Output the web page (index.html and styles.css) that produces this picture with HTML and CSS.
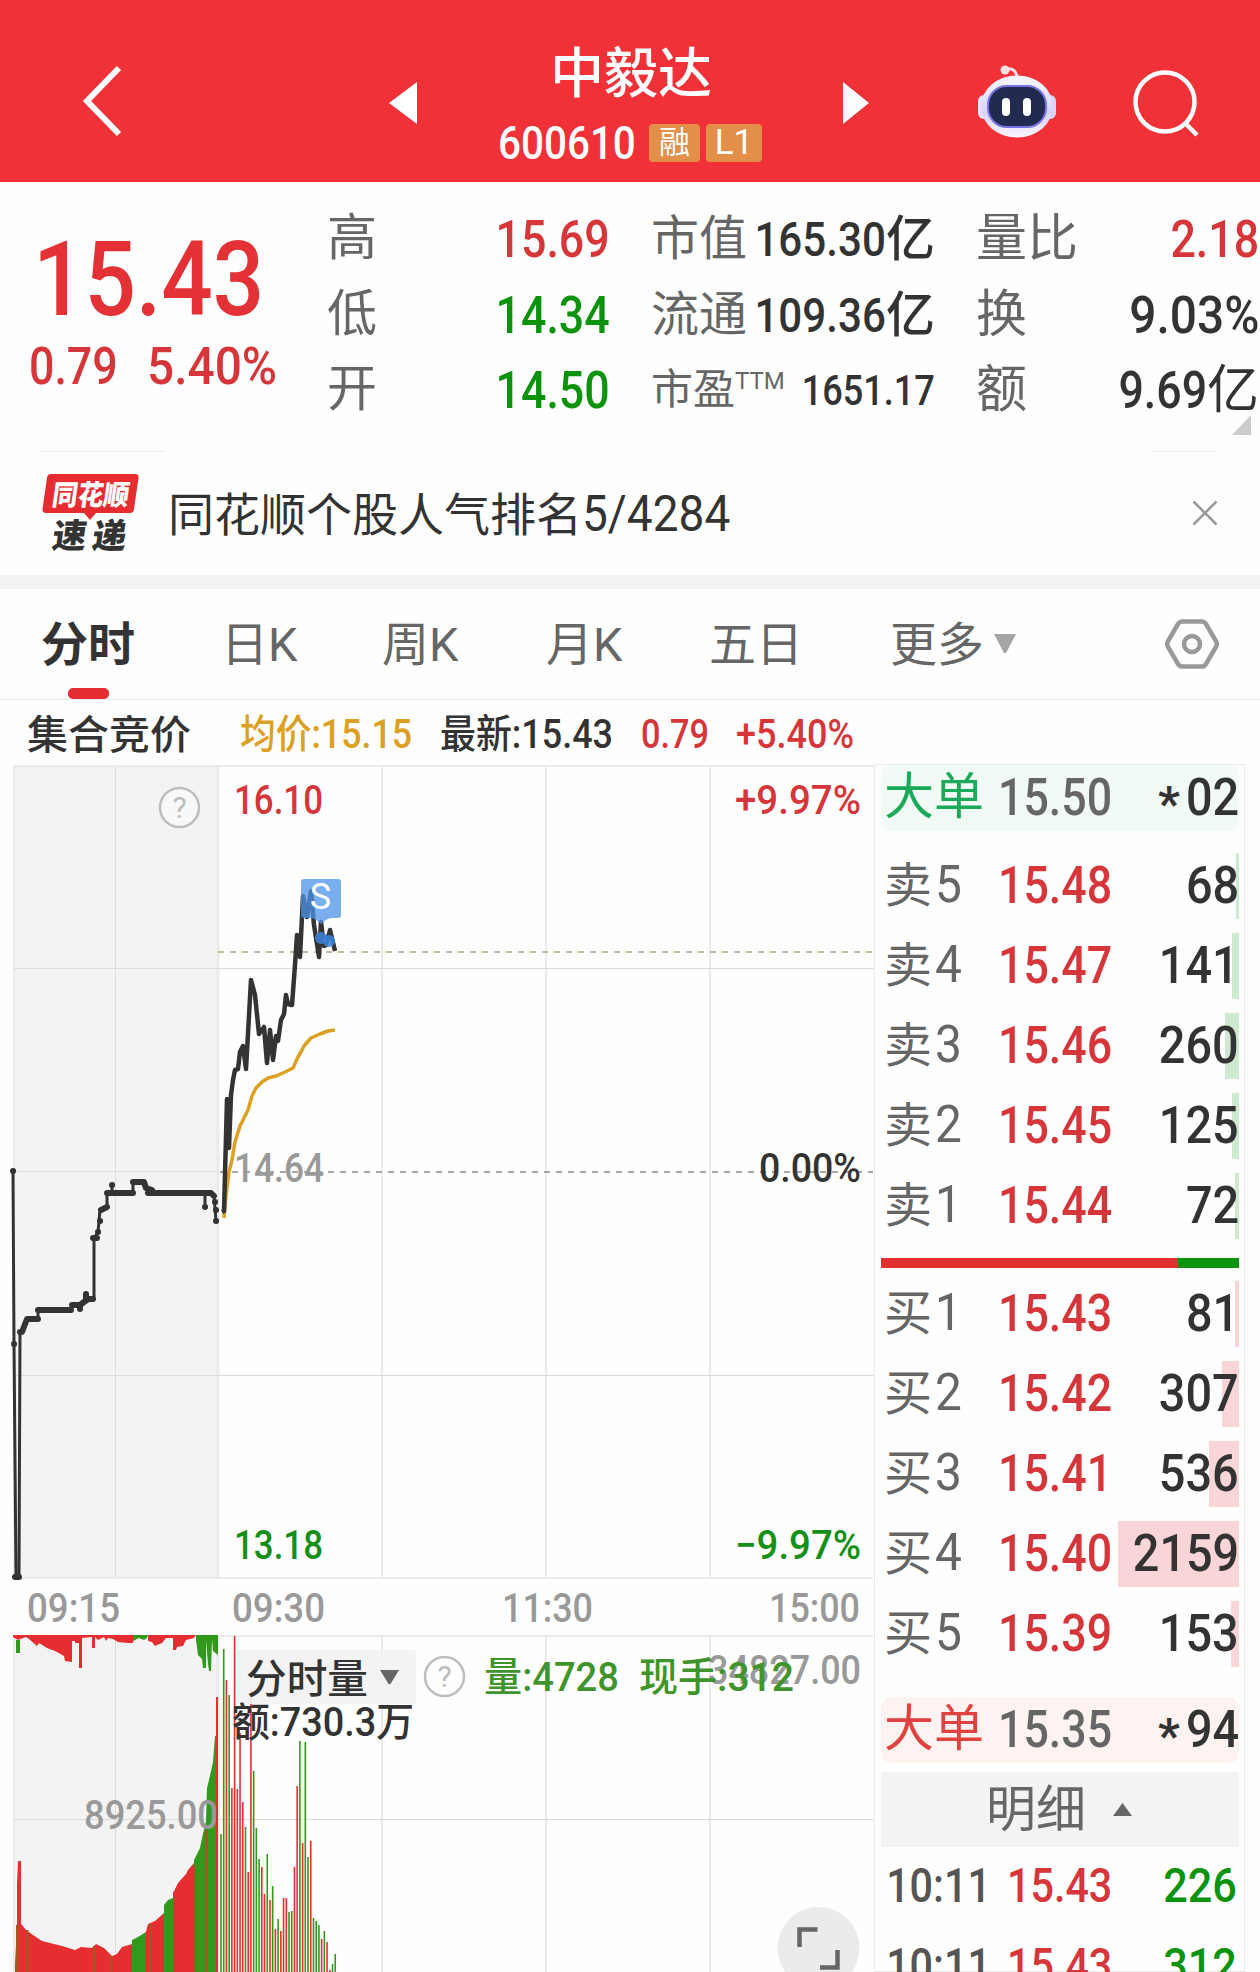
FILE: index.html
```html
<!DOCTYPE html>
<html lang="zh-CN">
<head>
  <meta charset="UTF-8">
  <meta name="viewport" content="width=device-width, initial-scale=1.0">
  <title>中毅达 600610</title>
  <link rel="stylesheet" href="styles.css">
</head>
<body>
  <header class="header">
    <svg class="back" width="44" height="76" viewBox="0 0 44 76"><path d="M38 5 L6 38 L38 71"/></svg>
    <svg class="prev" width="28" height="42" viewBox="0 0 28 42"><path d="M28 0 V42 L0 21 Z"/></svg>
    <div class="stock">
      <h1>中毅达</h1>
      <div class="code">
        <span class="code_num"><span class="n">600610</span></span>
        <span class="badge rong">融</span>
        <span class="badge level">L1</span>
      </div>
    </div>
    <svg class="next" width="28" height="42" viewBox="0 0 28 42"><path d="M0 0 V42 L26 21 Z"/></svg>
    <svg class="robot" width="80" height="76" viewBox="0 0 80 76">
      <defs>
        <linearGradient id="shell" x1="0" y1="0" x2="0" y2="1">
          <stop offset="0" stop-color="#fbf8ff"/>
          <stop offset=".6" stop-color="#d5d3fa"/>
          <stop offset="1" stop-color="#fdf4fb"/>
        </linearGradient>
      </defs>
      <path d="M28 6 Q40 4 40 16" fill="none" stroke="#f7dfe6" stroke-width="3"/>
      <circle cx="28" cy="7" r="4.5" fill="#fbe3e6"/>
      <rect x="1" y="32" width="12" height="24" rx="6" fill="#e6e3fb"/>
      <rect x="67" y="32" width="12" height="24" rx="6" fill="#d6d4fb"/>
      <ellipse cx="40" cy="43.500" rx="36" ry="31" fill="url(#shell)"/>
      <rect x="11" y="23" width="58" height="41" rx="19" fill="#232a50" stroke="#7773e0" stroke-width="2"/>
      <rect x="25" y="35" width="8" height="18" rx="4" fill="#fff"/>
      <rect x="46" y="35" width="8" height="18" rx="4" fill="#fff"/>
    </svg>
    <svg class="search" width="70" height="70" viewBox="0 0 70 70"><circle cx="34" cy="34" r="29.5"/><path d="M54 55 L66 67"/></svg>
  </header>

  <section class="quote">
    <div class="now">
      <div class="price"><span class="n">15.43</span></div>
      <div class="change"><span class="n">0.79</span><span class="n pct">5.40%</span></div>
    </div>
    <dl class="col col_a">
      <dt>高</dt><dd class="up"><span class="n">15.69</span></dd>
      <dt>低</dt><dd class="down"><span class="n">14.34</span></dd>
      <dt>开</dt><dd class="down"><span class="n">14.50</span></dd>
    </dl>
    <dl class="col col_b">
      <dt>市值</dt><dd><span class="n">165.30</span>亿</dd>
      <dt>流通</dt><dd><span class="n">109.36</span>亿</dd>
      <dt class="small">市盈<sup>TTM</sup></dt><dd class="small"><span class="n">1651.17</span></dd>
    </dl>
    <dl class="col col_c">
      <dt>量比</dt><dd class="up"><span class="n">2.18</span></dd>
      <dt>换</dt><dd><span class="n pct">9.03%</span></dd>
      <dt>额</dt><dd><span class="n">9.69</span>亿</dd>
    </dl>
    <i class="corner"></i>
  </section>

  <section class="notice">
    <svg class="logo" width="98" height="84" viewBox="0 0 98 84">
      <path d="M9 1 H93 Q97 1 96.500 5 L92 36 Q91.500 40 88 40 H54 L48 47 L42 40 H4 Q0 40 .5 36 L5 5 Q5.500 1 9 1 Z" fill="#e62c30"/>
      <text class="logo_top" transform="translate(9 32) skewX(-8)" textLength="77" lengthAdjust="spacingAndGlyphs">同花顺</text>
      <text class="logo_btm" transform="translate(9 75) skewX(-8)" textLength="74">速递</text>
    </svg>
    <p>同花顺个股人气排名<span class="n">5/4284</span></p>
    <svg class="close" width="26" height="26" viewBox="0 0 26 26"><path d="M1.500 1.500 L24.500 24.500 M24.500 1.500 L1.500 24.500"/></svg>
  </section>

  <nav class="tabs">
    <a class="tab t1 on">分时</a>
    <a class="tab t2">日K</a>
    <a class="tab t3">周K</a>
    <a class="tab t4">月K</a>
    <a class="tab t5">五日</a>
    <a class="tab t6">更多<svg width="24" height="20" viewBox="0 0 24 20"><path d="M1 0 H23 L13 19 H11 Z"/></svg></a>
    <svg class="setting" width="54" height="50" viewBox="0 0 54 50">
      <path d="M17 2.500 H37 Q39.500 2.500 41 5 L51 22 Q52.500 25 51 28 L41 45 Q39.500 47.500 37 47.500 H17 Q14.500 47.500 13 45 L3 28 Q1.500 25 3 22 L13 5 Q14.500 2.500 17 2.500 Z"/>
      <circle cx="27" cy="25" r="8"/>
    </svg>
  </nav>

  <main class="main">
    <div class="left">
      <svg class="chart" width="874" height="1272" viewBox="0 700 874 1272">
        <!-- 顶部信息 -->
        <g class="info">
          <text x="27" y="749" textLength="164" class="dark" font-size="41">集合竞价</text>
          <text x="240" y="748" textLength="172" class="avg">均价:15.15</text>
          <text x="440" y="748" textLength="173" class="dark">最新:15.43</text>
          <text x="641" y="748" textLength="68" class="up">0.79</text>
          <text x="736" y="748" textLength="118" class="up">+5.40%</text>
        </g>

        <!-- 网格 -->
        <rect x="14" y="765" width="204" height="812" fill="#f3f3f3"/>
        <rect x="14" y="1636" width="204" height="336" fill="#f3f3f3"/>
        <g class="grid">
          <path d="M14 766 H874 M14 1578 H873 M14 1636 H873"/>
          <path d="M14 765 V1577 M382 767 V1577 M546 767 V1577 M710 767 V1577"/>
          <path d="M14 1636 V1972 M382 1636 V1972 M546 1636 V1972 M710 1636 V1972"/>
          <path d="M218 765 V1577 M218 1636 V1972" stroke-width="3"/>
        </g>
        <path class="thin" d="M14 968.500 H874 M14 1171.500 H218 M14 1375.500 H874 M14 1819.500 H874 M115.500 767 V1577 M115.500 1636 V1972"/>
        <path d="M218 952 H873" fill="none" stroke="#b5a47d" stroke-width="1.500" stroke-dasharray="6 6"/>
        <path d="M220 1172 H873" fill="none" stroke="#8b8b8b" stroke-width="1.500" stroke-dasharray="6 6"/>

        <!-- 价格 -->
        <g class="label">
          <text x="234" y="814" textLength="89" class="up">16.10</text>
          <text x="234" y="1182" textLength="90" class="gray">14.64</text>
          <text x="234" y="1559" textLength="89" class="down">13.18</text>
          <text x="735" y="814" textLength="126" class="up">+9.97%</text>
          <text x="759" y="1182" textLength="102" class="dark">0.00%</text>
          <text x="735" y="1559" textLength="126" class="down">−9.97%</text>
          <text x="27" y="1622" textLength="93" class="gray">09:15</text>
          <text x="232" y="1622" textLength="93" class="gray">09:30</text>
          <text x="502" y="1622" textLength="91" class="gray">11:30</text>
          <text x="769" y="1622" textLength="91" class="gray">15:00</text>
        </g>
        <g class="help"><circle cx="179.500" cy="807.500" r="19.500"/><text x="179.500" y="818" text-anchor="middle">?</text></g>

        <!-- 集合竞价走势 -->
        <path class="auction" d="M13 1171 L14 1344 L16 1577 H19 L20 1332"/>
        <path class="auction" d="M38 1319 V1310 M94 1299 V1238 L98 1232 L100 1210 L107 1206 V1193 M112 1193 V1185 M133 1193 V1182 M205 1195 V1207 M214 1196 L216 1221"/>
        <path class="auction bold" d="M15 1577 H19 M20 1332 H22 L27 1319 H38 M38 1310 H71 M72 1305 H80 V1309 M80 1305 L88 1299 H93 M86 1294 V1299 M93 1238 H97 M98 1232 h.1 M100 1221 h.1 M101 1210 L107 1207 M107 1193 H133 M112 1185 h.1 M133 1182 H144 L146 1188 L152 1190 L148 1193 H211 L214 1196 M205 1207 h.1 M215 1202 h.1 M216 1210 h.1 M216 1221 h.1 M13 1171 h.1 M14 1344 h.1"/>

        <!-- 分时走势 -->
        <polyline class="line_avg" points="224,1218 226,1195 229,1172 232,1160 235,1142 240,1126 248,1110 252,1096 256,1088 262,1082 268,1078 276,1076 285,1072 293,1068 298,1057 301,1052 304,1046 311,1038 320,1034 328,1031 335,1030"/>
        <polyline class="line_now" points="222,1212 224,1211 227,1099 229,1148 231,1095 233,1080 235,1070 238,1069 240,1052 243,1046 246,1069 251,980 255,995 259,1034 264,1027 267,1063 270,1030 273,1060 276,1036 278,1041 281,1020 284,1014 286,995 288,1004 292,1005 295,965 297,935 300,957 303,896 307,917 311,891 314,925 319,957 321,922 324,946 326,945 330,930 335,951"/>
        <g class="sell_mark">
          <path d="M304 879 H338 Q341 879 341 882 V915 Q341 918 338 918 H331 Q326 919 321 924 Q316 919 311 918 H304 Q301 918 301 915 V882 Q301 879 304 879 Z"/>
          <text x="320.500" y="909" text-anchor="middle">S</text>
          <circle cx="321" cy="938" r="6"/><circle cx="329" cy="941" r="6"/>
        </g>

        <!-- 成交量 -->
        <g id="hang"></g>
        <g id="auctionVol"></g>
        <g id="vol"></g>
        <text x="84" y="1829" textLength="134" class="label gray">8925.00</text>
        <text x="708" y="1684" textLength="153" class="label gray">34827.00</text>
        <rect x="237" y="1650" width="179" height="54" rx="2" fill="#f2f2f2" fill-opacity=".9"/>
        <text x="246" y="1693" textLength="122" class="dark" font-size="40">分时量</text>
        <path d="M380 1670 H399 L390.500 1684 H388.500 Z" fill="#666"/>
        <g class="help"><circle cx="444.500" cy="1676.500" r="19.500"/><text x="444.500" y="1687" text-anchor="middle">?</text></g>
        <text x="232" y="1736" textLength="182" class="dark vtext">额:730.3万</text>
        <text x="484" y="1691" textLength="135" class="green vtext">量:4728</text>
        <text x="639" y="1691" textLength="155" class="green vtext">现手:312</text>

        <circle cx="818.500" cy="1948" r="41" fill="#ebebeb"/>
        <path d="M799.500 1947 V1929.500 H817.500 M837.500 1950 V1967.500 H820" fill="none" stroke="#666" stroke-width="4.500"/>
      </svg>
    </div>

    <aside class="book">
      <div class="row big sell"><b>大单</b><span class="p"><span class="n">15.50</span></span><span class="v"><i>*</i><span class="n">02</span></span></div>
      <div class="list">
        <div class="row ask"><b>卖<span class="n">5</span></b><span class="p"><span class="n">15.48</span></span><span class="v" style="--w:3px"><span class="n">68</span></span></div>
        <div class="row ask"><b>卖<span class="n">4</span></b><span class="p"><span class="n">15.47</span></span><span class="v" style="--w:7px"><span class="n">141</span></span></div>
        <div class="row ask"><b>卖<span class="n">3</span></b><span class="p"><span class="n">15.46</span></span><span class="v" style="--w:14px"><span class="n">260</span></span></div>
        <div class="row ask"><b>卖<span class="n">2</span></b><span class="p"><span class="n">15.45</span></span><span class="v" style="--w:7px"><span class="n">125</span></span></div>
        <div class="row ask"><b>卖<span class="n">1</span></b><span class="p"><span class="n">15.44</span></span><span class="v" style="--w:4px"><span class="n">72</span></span></div>
      </div>
      <div class="ratio"><i></i></div>
      <div class="list">
        <div class="row bid"><b>买<span class="n">1</span></b><span class="p"><span class="n">15.43</span></span><span class="v" style="--w:4px"><span class="n">81</span></span></div>
        <div class="row bid"><b>买<span class="n">2</span></b><span class="p"><span class="n">15.42</span></span><span class="v" style="--w:17px"><span class="n">307</span></span></div>
        <div class="row bid"><b>买<span class="n">3</span></b><span class="p"><span class="n">15.41</span></span><span class="v" style="--w:30px"><span class="n">536</span></span></div>
        <div class="row bid"><b>买<span class="n">4</span></b><span class="p"><span class="n">15.40</span></span><span class="v" style="--w:121px"><span class="n">2159</span></span></div>
        <div class="row bid"><b>买<span class="n">5</span></b><span class="p"><span class="n">15.39</span></span><span class="v" style="--w:8px"><span class="n">153</span></span></div>
      </div>
      <div class="row big buy"><b>大单</b><span class="p"><span class="n">15.35</span></span><span class="v"><i>*</i><span class="n">94</span></span></div>
      <div class="detail">明细<svg width="19" height="13" viewBox="0 0 19 13"><path d="M0 13 L9.500 0 L19 13 Z"/></svg></div>
      <div class="trade"><span class="time n">10:11</span><span class="tp"><span class="n">15.43</span></span><span class="tv"><span class="n">226</span></span></div>
      <div class="trade"><span class="time n">10:11</span><span class="tp"><span class="n">15.43</span></span><span class="tv"><span class="n">312</span></span></div>
    </aside>
  </main>

  <script src="script.js"></script>
</body>
</html>
```
FILE: styles.css
```css
*{
  margin: 0; padding: 0;
  box-sizing: border-box;
}
body{
  width: 1260px; height: 1972px;
  overflow: hidden;
  background: #fefefe;
  color: #333;
  font-family: Roboto, "Noto Sans CJK SC", sans-serif;
}
svg{
  display: block;
  flex: none;
}
b, i{
  font-weight: normal; font-style: normal;
}
.up{ color: #d6363a; fill: #d6363a; }
.down{ color: #0b930d; fill: #148f17; }
.dark{ fill: #333; }
.gray{ fill: #999; }
.green{ fill: #3f952b; }
.avg{ fill: #dca022; }

/* 窄体数字 */
.n{
  display: inline-block;
  font-weight: 500;
  transform: scaleX(0.86);
  transform-origin: left;
}

/* 头部 */
.header{
  display: flex;
  align-items: flex-start;
  height: 182px;
  background: #f03138;
  color: #fff;
}
.header path{ fill: #fff; }
.back{ margin: 63px 0 0 81px; }
.header .back path{ fill: none; stroke: #fff; stroke-width: 6; }
.prev{ margin: 82px 0 0 264px; }
.stock{
  width: 270px;
  margin: 40px 0 0 81px;
}
.stock h1{
  padding: 2px 0 0 52px;
  font-size: 54px; font-weight: 500; line-height: 66px;
}
.code{
  display: flex;
  align-items: center;
  height: 38px; margin-top: 16px;
}
.code_num{
  width: 151px;
  font-size: 47px; line-height: 38px;
}
.badge{
  height: 38px;
  border-radius: 4px;
  background: #e28f49;
  font-size: 31px; line-height: 38px;
  text-align: center;
}
.rong{ width: 51px; }
.level{ width: 56px; margin-left: 6px; font-size: 35px; }
.next{ margin: 82px 0 0 75px; }
.robot{ margin: 63px 0 0 106px; }
.header .robot path{ fill: none; }
.search{ margin: 68px 0 0 74px; }
.search circle, .header .search path{
  fill: none; stroke: #fff; stroke-width: 4.5;
}

/* 行情 */
.quote{
  display: flex;
  position: relative;
  height: 269px; padding-top: 19px;
}
.now{
  width: 327px;
  color: #e43135;
}
.price{
  margin-top: 19px; padding-left: 33px;
  font-size: 103px; line-height: 120px;
}
.price .n{ transform: scaleX(0.88); }
.change{
  display: flex;
  margin-top: -3px; padding-left: 29px;
  font-size: 52px; line-height: 60px;
  color: #d6363a;
}
.change .pct{ margin-left: 15px; }
.now .pct, .col .pct{ transform: scaleX(0.92); }
.col{
  display: grid;
  grid-template-columns: auto 1fr;
  grid-auto-rows: 75.5px;
  font-size: 50px; line-height: 75px;
}
.col dt{
  color: #666;
  white-space: nowrap;
}
.col dd{
  display: flex;
  justify-content: flex-end;
  min-width: 0;
  font-size: 52px;
  line-height: 78px;
  white-space: nowrap;
}
.col dd .n{ transform-origin: right; }
.col_a{ width: 283px; }
.col_b{ width: 284px; margin-left: 41px; font-size: 48px; }
.col_b dd{ font-size: 49px; font-weight: 500; }
.col_c{ width: 283px; margin-left: 41px; font-size: 51px; }
.col .small{ font-size: 42px; }
.col sup{
  font-size: 24px; line-height: 1;
  vertical-align: 15px;
}
.corner{
  position: absolute;
  right: 9px; bottom: 16px;
  border-left: 19px solid transparent;
  border-bottom: 20px solid #ccc;
}

/* 人气排名 */
.notice{
  display: flex;
  position: relative;
  height: 124px; padding-left: 42px;
}
.notice::before, .notice::after{
  content: "";
  position: absolute;
  top: 0; left: 40px;
  width: 125px; height: 1px;
  background: #ededed;
}
.notice::after{
  left: 1152px; width: 65px;
}
.logo{ margin-top: 22px; }
.logo text{
  font-family: "Noto Sans CJK SC", sans-serif;
  font-weight: 900;
}
.logo_top{ font-size: 28px; fill: #fff; }
.logo_btm{ font-size: 34px; fill: #333; }
.notice p{
  width: 1020px; margin: 32px 0 0 28px;
  font-size: 46px; line-height: 62px;
}
.notice p .n{
  font-weight: 400; font-size: 50px;
  transform: scaleX(0.92);
}
.close{ margin: 49px 0 0 4px; }
.close path{ fill: none; stroke: #999; stroke-width: 2.5; }

/* 周期 */
.tabs{
  display: flex;
  height: 125px;
  border-top: 14px solid #f3f3f3;
  border-bottom: 1px solid #e6e6e6;
  font-size: 47px; line-height: 112px;
  color: #666;
}
.tab{
  display: flex;
  position: relative;
}
.t1{ width: 180px; margin-left: 41px; }
.t2{ width: 161px; }
.t3{ width: 164px; }
.t4{ width: 163px; }
.t5{ width: 181px; }
.t6{ width: 275px; }
.t6 svg{ margin: 45px 0 0 9px; fill: #a5a5a5; }
.on{ color: #333; font-weight: 700; }
.on::after{
  content: "";
  position: absolute;
  left: 27px; bottom: 0;
  width: 41px; height: 11px;
  border-radius: 5px;
  background: #e62c30;
}
.setting{
  margin-top: 30px;
  fill: none; stroke: #999; stroke-width: 4.5;
}

/* 图表 */
.main{ display: flex; }
.left{ width: 874px; }
.chart text{ font-weight: 500; }
.chart .info text[textLength], .chart .vtext, .label{ font-size: 40px; }
.label text{ font-size: 40px; }
.grid path{ fill: none; stroke: #ebebeb; stroke-width: 2; }
.grid path[stroke-width]{ stroke-width: 3; }
.thin{ fill: none; stroke: #dcdcdc; stroke-width: 1; }
.help circle{ fill: #fefefe; fill-opacity: 0.4; stroke: #bdbdbd; stroke-width: 2.5; }
.chart .help text{ font-size: 30px; font-weight: 400; fill: #bdbdbd; }
.auction{
  fill: none; stroke: #333; stroke-width: 3;
  stroke-linejoin: round; stroke-linecap: round;
}
.bold{ stroke-width: 6; }
.line_avg{ fill: none; stroke: #dca022; stroke-width: 3.5; stroke-linejoin: round; }
.line_now{ fill: none; stroke: #333; stroke-width: 4.5; stroke-linejoin: round; }
.sell_mark path{ fill: #4c94e8; fill-opacity: 0.75; }
.sell_mark circle{ fill: #3b86dc; fill-opacity: 0.85; }
.chart .sell_mark text{ font-size: 36px; font-weight: 400; fill: #fff; }
.red_bar{ fill: #e62e30; }
.green_bar{ fill: #319a1c; }

/* 五档 */
.book{
  width: 371px; height: 1208px;
  margin-top: 64px;
  border: 1px solid #ebebeb;
  padding: 0 5px 0 6px;
}
.row{
  display: flex;
  height: 66px; margin-bottom: 14px;
  padding-left: 3px;
  font-size: 48px; line-height: 65px;
}
.row b{
  width: 114px;
  color: #666;
  white-space: nowrap;
}
.row b .n{
  margin-left: 3px;
  font-size: 52px; font-weight: 400; line-height: 60px;
  transform: scaleX(0.92);
}
.p{
  width: 115px;
  font-size: 52px;
  color: #d6363a;
}
.v{
  position: relative;
  flex: 1;
  font-size: 52px;
  text-align: right;
}
.v .n, .tv .n{ transform-origin: right; transform: scaleX(0.9); }
.list .v::before{
  content: "";
  position: absolute;
  top: 0; right: 0;
  width: var(--w); height: 66px;
  background: #cfe8d0;
}
.list .bid .v::before{ background: #f9d5d8; }
.list .v .n{ position: relative; }
.big{
  border-radius: 10px;
  font-size: 50px;
}
.big .p{ color: #666; }
.big i{
  font-size: 48px; font-weight: 700;
  vertical-align: -5px;
}
.sell{
  margin-bottom: 22px;
  background: #f2faf6;
}
.sell b{ color: #1aaa5a; }
.buy{
  background: #fff3f2;
  margin: 16px 0 9px;
}
.buy b{ color: #e0423f; }
.list{ height: 400px; }
.ratio{
  height: 10px; margin: 5px 0 13px;
  background: #e03030;
}
.ratio i{
  display: block;
  width: 61px; height: 10px;
  margin-left: auto;
  background: #0b930d;
}
.detail{
  display: flex;
  justify-content: center;
  height: 75px; padding-right: 2px;
  background: #f3f3f3;
  color: #666;
  font-size: 50px; line-height: 77px;
}
.detail svg{ margin: 31px 0 0 27px; fill: #666; }
.trade{
  display: flex;
  height: 80px;
  font-size: 48px; line-height: 78px;
}
.time{ width: 126px; padding-left: 6px; color: #555; }
.tp{ width: 130px; color: #d6363a; }
.tv{ flex: 1; text-align: right; color: #0b930d; padding-right: 2px; }
```
FILE: script.js
```js
const NS = "http://www.w3.org/2000/svg";

function poly(id, color, points){
  const el = document.createElementNS(NS, "polygon");
  el.setAttribute("class", color === "r" ? "red_bar" : "green_bar");
  el.setAttribute("points", points);
  document.getElementById(id).appendChild(el);
}

// 竞价上方未匹配量
poly("hang", "r", "13,1635 133,1635 133,1643 128,1643 118,1642 113,1639 108,1638 106,1641 104,1637 98,1640 95,1637 95,1648 92,1648 92,1637 82,1638 82,1668 79,1668 79,1643 75,1643 75,1641 72,1641 72,1662 65,1661 64,1656 55,1651 47,1648 39,1643 37,1646 29,1639 26,1637 18,1640 13,1637");
poly("hang", "g", "16,1640 20,1640 20,1653 16,1653");
poly("hang", "g", "133,1635 148,1635 147,1638 144,1640 139,1638 133,1641");
poly("hang", "r", "148,1635 196,1635 194,1638 186,1640 183,1646 177,1647 176,1650 173,1650 173,1638 166,1638 162,1643 155,1646 152,1642 148,1641");
poly("hang", "g", "196,1635 218,1635 218,1655 213,1651 212,1639 211,1671 209,1671 208,1664 206,1640 206,1668 203,1668 202,1659 198,1655 196,1640");

// 竞价匹配量
poly("auctionVol", "r", "15,1964 17,1925 17,1884 18,1861 21,1861 21,1924 26,1930 33,1935 42,1941 50,1943 62,1946 75,1950 81,1947 92,1948 96,1944 104,1948 112,1956 117,1954 122,1947 132,1944 132,1972 15,1972");
poly("auctionVol", "g", "132,1940 138,1937 146,1932 146,1972 132,1972");
poly("auctionVol", "r", "146,1932 148,1924 155,1921 164,1913 164,1972 146,1972");
poly("auctionVol", "g", "164,1905 168,1900 173,1898 173,1972 164,1972");
poly("auctionVol", "r", "173,1893 178,1883 186,1874 188,1870 194,1863 194,1972 173,1972");
poly("auctionVol", "g", "194,1860 200,1848 202,1838 206,1821 207,1788 209,1780 213,1762 215,1736 216,1736 216,1972 194,1972");
poly("auctionVol", "r", "216,1697 218,1697 218,1972 216,1972");
for (const [x, top] of [[16, 1925], [26, 1930], [93, 1946], [110, 1956], [149, 1924], [193, 1866], [205, 1830]]) {
  const el = document.createElementNS(NS, "rect");
  el.setAttribute("x", x);
  el.setAttribute("y", top);
  el.setAttribute("width", 2.5);
  el.setAttribute("height", 1972 - top);
  el.setAttribute("fill", "#a5551f");
  document.getElementById("auctionVol").appendChild(el);
}

// 分时成交量
const bars = "g1834 g1649 r1680 g1695 r1788 r1636 r1789 r1733 r1802 g1827 r1872 r1688 g1771 g1828 g1859 r1867 r1894 g1854 r1900 g1886 r1929 g1919 r1931 r1898 r1898 g1912 g1911 r1867 r1786 g1741 r1843 g1742 g1857 r1841 g1918 g1921 g1925 r1939 g1931 r1942 r1970 g1964 g1954".split(" ");
bars.forEach((bar, i) => {
  const x = 221 + i * 2.72;
  const top = Number(bar.slice(1));
  poly("vol", bar[0], `${x - 0.8},${top} ${x + 0.8},${top} ${x + 0.8},1972 ${x - 0.8},1972`);
});

// 数字压缩到指定宽度
document.querySelectorAll(".chart text[textLength]").forEach(t => {
  t.setAttribute("lengthAdjust", "spacingAndGlyphs");
});
```
